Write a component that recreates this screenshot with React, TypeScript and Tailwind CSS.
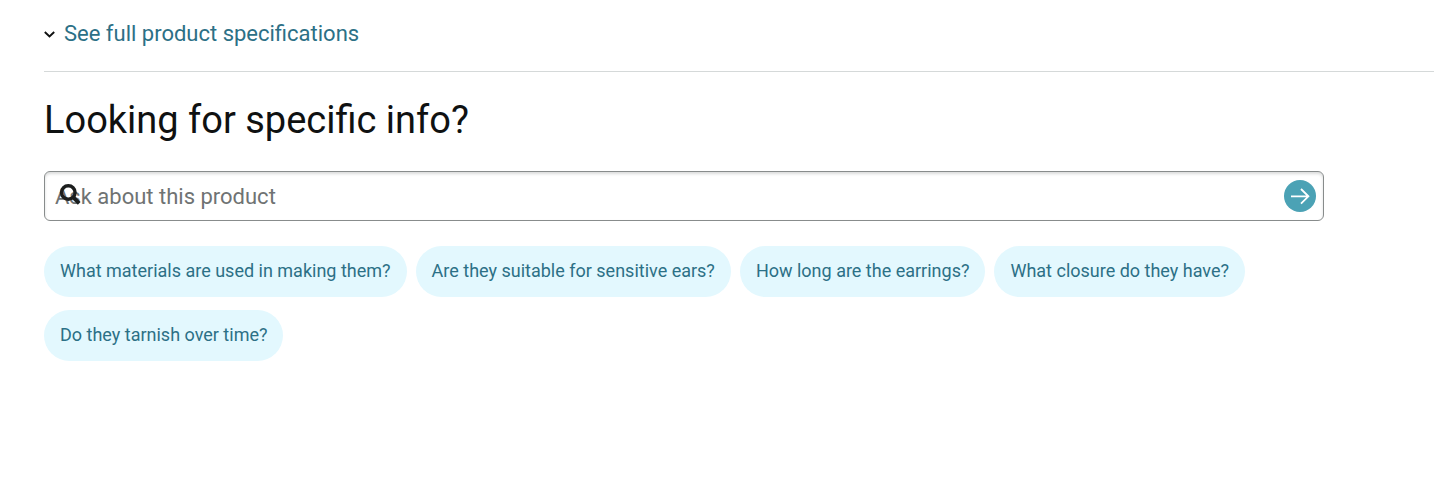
import { useState } from 'react';

const QUESTIONS = [
  'What materials are used in making them?',
  'Are they suitable for sensitive ears?',
  'How long are the earrings?',
  'What closure do they have?',
  'Do they tarnish over time?',
];

function ChevronIcon() {
  return (
    <svg viewBox="0 0 12 8" className="h-2 w-3 shrink-0" fill="none" stroke="#0f1111" strokeWidth="1.9" aria-hidden>
      <path d="M.8 2 5.5 6.4 10.2 2" />
    </svg>
  );
}

function SearchIcon() {
  return (
    <svg viewBox="0 0 22 22" className="h-[22px] w-[22px]" fill="none" stroke="#1c1e1e" aria-hidden>
      <circle cx="9.3" cy="9.5" r="6.8" strokeWidth="3.4" />
      <path d="m14 14.2 6.2 6.2" strokeWidth="3.8" />
    </svg>
  );
}

function ArrowIcon() {
  return (
    <svg viewBox="0 0 32 32" className="h-8 w-8" fill="none" stroke="#fff" strokeWidth="1.8" aria-hidden>
      <path d="M7 16.3h17.2M17 9l7.4 7.3-7.4 7.3" />
    </svg>
  );
}

export default function App() {
  const [question, setQuestion] = useState('');

  return (
    <main className="bg-white pt-4 pl-11 font-['Roboto',sans-serif] text-[#0f1111]">
      <div className="border-b border-[#d5d9d9] pb-5">
        <a href="#specifications" className="inline-flex items-center gap-2 text-[22px] leading-[35px] text-[#2c7086]">
          <ChevronIcon />
          See full product specifications
        </a>
      </div>

      <section aria-labelledby="specific-info" className="pt-6 pr-[110px]">
        <h2 id="specific-info" className="text-[38px] leading-12">
          Looking for specific info?
        </h2>

        <form className="relative mt-[27px]" onSubmit={(e) => e.preventDefault()}>
          <input
            type="text"
            aria-label="Ask about this product"
            placeholder="Ask about this product"
            value={question}
            onChange={(e) => setQuestion(e.target.value)}
            className="block h-[50px] w-full rounded-md border border-[#888c8c] bg-white pr-12 pl-[10px] text-[22px] shadow-[inset_0_2px_3px_rgba(15,17,17,0.15)] outline-none placeholder:text-[#6f7373]"
          />
          <span className="pointer-events-none absolute top-3 left-[15px]">
            <SearchIcon />
          </span>
          <button
            type="submit"
            aria-label="Submit question"
            className="absolute top-[9px] right-2 rounded-full bg-[#4ba2b5]"
          >
            <ArrowIcon />
          </button>
        </form>

        <div className="mt-[25px] flex flex-wrap gap-x-[9px] gap-y-[13px]">
          {QUESTIONS.map((text) => (
            <button
              key={text}
              type="button"
              onClick={() => setQuestion(text)}
              className="h-[51px] rounded-full bg-[#e3f8fe] px-4 pb-0.5 text-lg text-[#2c7086]"
            >
              {text}
            </button>
          ))}
        </div>
      </section>
    </main>
  );
}
